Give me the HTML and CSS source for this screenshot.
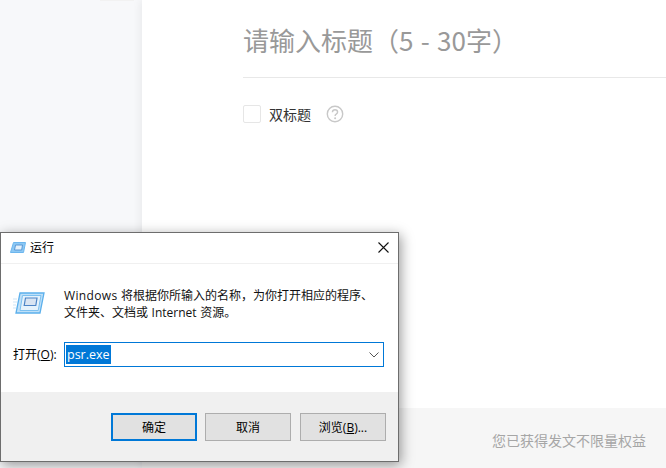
FILE: index.html
```html
<!DOCTYPE html>
<html lang="zh-CN">
<head>
<meta charset="utf-8">
<title>运行</title>
<link rel="stylesheet" href="styles.css">
</head>
<body>
<div class="page">
  <aside class="sidebar"><div class="side-item"></div></aside>
  <main class="main">
    <section class="editor">
      <h1 class="title">请输入标题（5 - 30字）</h1>
      <div class="options">
        <span class="checkbox"></span>
        <span class="opt-label">双标题</span>
        <svg class="help" width="18" height="18" viewBox="0 0 18 18">
          <circle cx="9" cy="9" r="7.700" fill="none" stroke="#c8c8c8" stroke-width="1.400"/>
          <path d="M6.400 7.200C6.500 5.700 7.600 4.800 9 4.800c1.500 0 2.600.9 2.600 2.200 0 1.100-.7 1.600-1.400 2.100-.8.500-1.100 1-1.100 1.900" fill="none" stroke="#c8c8c8" stroke-width="1.400"/>
          <circle cx="9.100" cy="13.200" r="1" fill="#c8c8c8"/>
        </svg>
      </div>
    </section>
    <footer class="foot">您已获得发文不限量权益</footer>
  </main>
</div>

<div class="dialog">
  <div class="titlebar">
    <svg class="run-small" width="16" height="11" viewBox="0 0 16 11">
      <path d="M3.500.500h12l-2 10H.500z" fill="#8cc8f4" stroke="#6cb6ee"/>
      <path d="M5.500 3h7l-.8 5H4.500z" fill="#e4f1fb" stroke="#5a98d6"/>
    </svg>
    <span class="dlg-title">运行</span>
    <svg class="close" width="11" height="11" viewBox="0 0 11 11">
      <path d="M.5.500l10 10M10.500.500l-10 10" stroke="#111" stroke-width="1.100" fill="none"/>
    </svg>
  </div>
  <div class="dlg-body">
    <div class="desc-row">
      <svg class="run-big" width="32" height="22" viewBox="0 0 32 22">
        <path d="M0 7h4M0 10h4M0 13h3M0 16h3" stroke="#cfe5f7" stroke-width="1" fill="none"/>
        <path d="M7 1h24l-4 20H3z" fill="#bfe0f8" stroke="#5cb0ec" stroke-width="1.300"/>
        <path d="M9.500 3.500h18.500l-2.800 15H7z" fill="#e4f2fc" stroke="#7cc0f0"/>
        <path d="M12.500 6h11.500l-1.200 7.500H11.200z" fill="#d8e4f2" stroke="#4c84c6" stroke-width="1.200"/>
      </svg>
      <p class="desc"><span class="word-wide">Windows</span> 将根据你所输入的名称，为你打开相应的程序、<br>文件夹、文档或 Internet 资源。</p>
    </div>
    <div class="open-row">
      <label class="open-label">打开(<u>O</u>):</label>
      <div class="combo">
        <span class="selected">psr.exe</span>
        <svg class="chev" width="10" height="6" viewBox="0 0 10 6"><path d="M.5.500L5 5 9.500.500" fill="none" stroke="#555" stroke-width="1"/></svg>
      </div>
    </div>
  </div>
  <div class="dlg-foot">
    <button class="btn btn-default">确定</button>
    <button class="btn">取消</button>
    <button class="btn btn-last">浏览(<u>B</u>)...</button>
  </div>
</div>
</body>
</html>
```
FILE: styles.css
```css
* { box-sizing: border-box; }
html, body { margin: 0; height: 100%; overflow: hidden; }
body {
  position: relative;
  width: 666px;
  height: 468px;
  font-family: "Noto Sans CJK SC", "Noto Sans", sans-serif;
  background: #fff;
  text-spacing-trim: space-all;
}
.page { display: flex; height: 468px; }
.sidebar { width: 142px; flex: none; background: #f7f8fa; padding-left: 100px; }
.side-item { width: 34px; height: 1px; background: #f2f2f2; }
.main {
  flex: 1;
  display: flex;
  flex-direction: column;
  background: #fff;
  box-shadow: -2px 0 8px rgba(0, 0, 0, 0.06);
  position: relative;
}
.editor { flex: 1; padding-left: 101px; }
.title {
  margin: 0;
  height: 78px;
  padding-top: 21px;
  border-bottom: 1px solid #e8e8e8;
  font-size: 26px;
  line-height: 38px;
  font-weight: 400;
  color: #999;
  white-space: nowrap;
  word-spacing: 1.500px;
}
.options { display: flex; align-items: center; margin-top: 26px; height: 20px; }
.checkbox {
  width: 18px;
  height: 18px;
  border: 1px solid #e6e6e6;
  border-radius: 2px;
  background: #fff;
}
.opt-label { margin-left: 8px; font-size: 14px; color: #333; line-height: 20px; }
.help { margin-left: 15px; }
.foot {
  height: 60px;
  background: #f6f6f6;
  padding: 22px 20px 0 0;
  text-align: right;
  font-size: 14px;
  line-height: 20px;
  color: #a6a6a6;
}
.dialog {
  position: absolute;
  left: 0;
  top: 232px;
  width: 399px;
  height: 230px;
  display: flex;
  flex-direction: column;
  background: #fff;
  border: 1px solid #6d6d6d;
  box-shadow: 2px 3px 12px rgba(0, 0, 0, 0.4);
  font-family: "Open Sans", "Noto Sans CJK SC", sans-serif;
  font-size: 12px;
  color: #000;
}
.titlebar {
  height: 31px;
  flex: none;
  display: flex;
  align-items: center;
  padding: 0 0 1px 9px;
  border-bottom: 1px solid #f0f0f0;
}
.dlg-title { margin-left: 4px; font-size: 12px; line-height: 16px; }
.close { margin-left: auto; margin-right: 9px; }
.dlg-body { flex: 1; padding: 23px 13px 0 12px; }
.desc-row { display: flex; align-items: flex-start; }
.run-big { margin-top: 5px; flex: none; }
.desc { margin: 0 0 0 19px; font-size: 12px; line-height: 17px; white-space: nowrap; color: #111; word-spacing: 0.500px; }
.word-wide { letter-spacing: 0.350px; }
.open-row { display: flex; align-items: center; margin-top: 21px; }
.open-label { font-size: 12px; width: 51px; line-height: 16px; white-space: nowrap; }
.combo {
  width: 320px;
  height: 25px;
  border: 1px solid #0078d7;
  display: flex;
  align-items: center;
  padding: 0 1px;
  background: #fff;
}
.selected { background: #0078d7; color: #fff; font-size: 12.500px; line-height: 19px; padding: 0 1px; }
.chev { margin-left: auto; margin-right: 3px; }
.dlg-foot {
  height: 69px;
  flex: none;
  background: #f0f0f0;
  display: flex;
  justify-content: flex-end;
  gap: 8px;
  padding: 21px 12px 0 0;
}
.btn {
  width: 86px;
  height: 28px;
  background: #e1e1e1;
  border: 1px solid #adadad;
  font: inherit;
  font-size: 12px;
  color: #000;
  padding: 0;
  margin: 0;
}
.btn-default { border: 2px solid #0078d7; }
.btn-last { margin-left: 1px; }
```
